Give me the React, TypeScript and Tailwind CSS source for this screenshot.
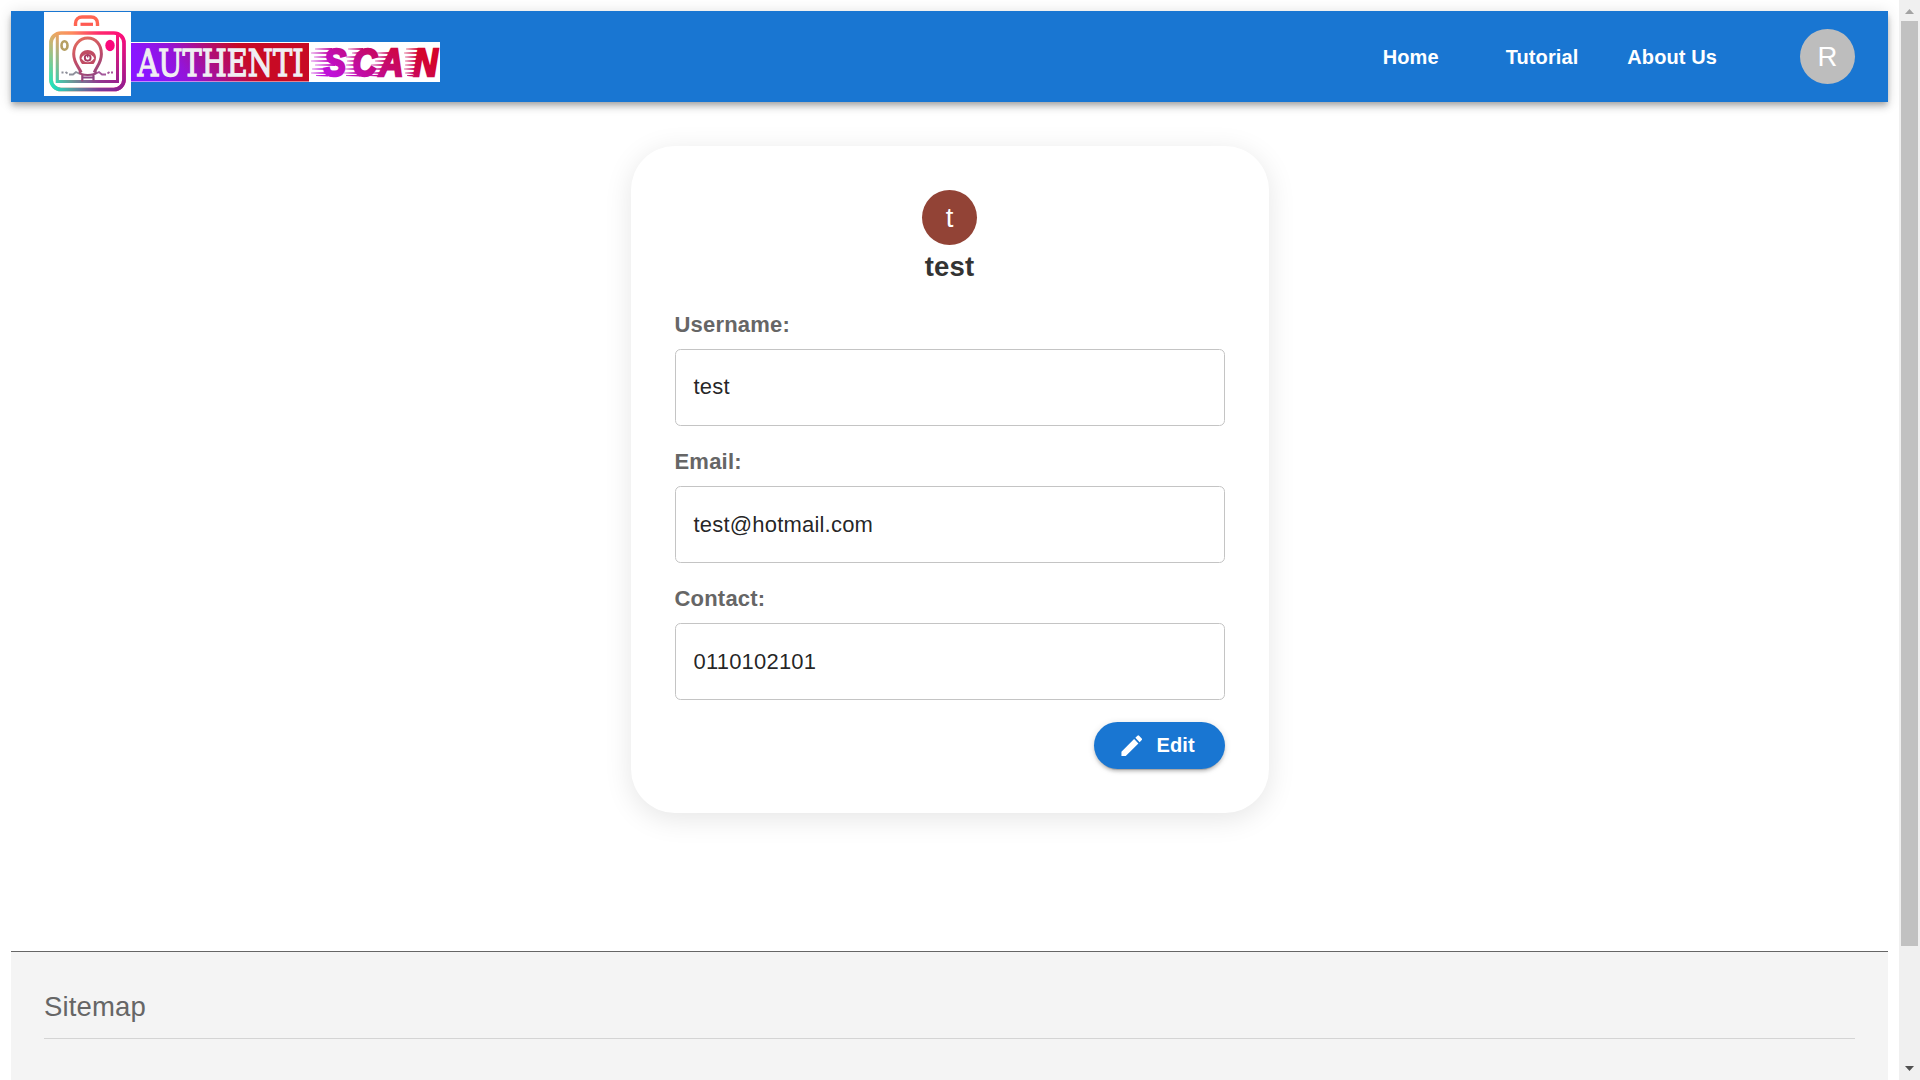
import React from "react";

function CameraLogo() {
  return (
    <svg className="block h-[84px] w-[87px] shrink-0" viewBox="0 0 87 84" fill="none">
      <defs>
        <linearGradient id="body" gradientUnits="userSpaceOnUse" x1="5" y1="20" x2="82" y2="20">
          <stop offset="0" stopColor="#e8b065" />
          <stop offset="0.3" stopColor="#ff8a5c" />
          <stop offset="0.65" stopColor="#ff2a6c" />
          <stop offset="1" stopColor="#ff0a7c" />
        </linearGradient>
        <linearGradient id="base" gradientUnits="userSpaceOnUse" x1="5" y1="20" x2="82" y2="20">
          <stop offset="0" stopColor="#00f5cc" />
          <stop offset="0.3" stopColor="#4c9ba4" />
          <stop offset="0.65" stopColor="#7a3a98" />
          <stop offset="1" stopColor="#8a1c90" />
        </linearGradient>
        <linearGradient id="bulb" gradientUnits="userSpaceOnUse" x1="30" y1="25" x2="50" y2="68">
          <stop offset="0" stopColor="#e8705c" />
          <stop offset="0.5" stopColor="#c04c68" />
          <stop offset="1" stopColor="#8c4484" />
        </linearGradient>
        <linearGradient id="fade" x1="0" y1="0" x2="0" y2="1">
          <stop offset="0.25" stopColor="#000" />
          <stop offset="0.95" stopColor="#fff" />
        </linearGradient>
        <mask id="lower">
          <rect width="87" height="84" fill="url(#fade)" />
        </mask>
      </defs>
      <rect width="87" height="84" fill="#fff" />
      <path d="M31.500 14v-2.500c0-4 3-6.500 6.500-6.500h9c4 0 6.500 2.500 6.500 6.500V14" stroke="#ff6552" strokeWidth="3.400" />
      <path d="M36.500 12.300h12.500" stroke="#ff5a52" strokeWidth="3.200" />
      {["url(#body)", "url(#base)"].map((paint, i) => (
        <g key={paint} stroke={paint} mask={i ? "url(#lower)" : undefined}>
          <rect x="7" y="21" width="73" height="56.500" rx="10" strokeWidth="3.700" />
          <path d="M13.300 22v47.600h60.200V22" strokeWidth="3" />
        </g>
      ))}
      <ellipse cx="20.500" cy="33.500" rx="3" ry="4.200" stroke="#b6a064" strokeWidth="2.600" />
      <ellipse cx="66" cy="33.500" rx="4.700" ry="5.700" fill="#fb087c" />
      <path d="M37 60.500c-1.500-5-7.300-9-7.300-18.500 0-9.500 6-16 14-16s13.700 6.500 13.700 16c0 9.500-5.700 13.500-7 18.500" stroke="url(#bulb)" strokeWidth="3" />
      <path d="M35.500 45.500c0-4.500 4-7.500 8.200-7.500s8.300 3 8.300 7.500c0 2.500-1 4.500-2.500 6.500h-11.500c-1.500-2-2.500-4-2.500-6.500Z" fill="#c04c64" />
      <path d="M37.300 46.200c2-3 4-4.200 6.400-4.200s4.500 1.200 6.600 4.200c-2 2.800-4 4-6.600 4s-4.400-1.200-6.400-4Z" fill="#fff" />
      <circle cx="43.700" cy="45.800" r="2.900" stroke="#a83a62" strokeWidth="1.900" />
      <path d="M43.700 42.500v3" stroke="#a83a62" strokeWidth="1.400" />
      <path d="M17.500 60.500h2M21.500 60l2 1.500M25 62.500h4l3-2.500 4 2" stroke="#8d8f9a" strokeWidth="1.800" />
      <path d="M69 60.500h-2M65.500 60l-2 1.500M62 62.500h-4l-3-2.500-4 2" stroke="#a3589a" strokeWidth="1.800" />
      <path d="M35.500 59.500c0 2.500 3 3.500 8.200 3.500s8.300-1 8.300-3.500M38.300 63v6.500M49.500 63v6.500" stroke="url(#bulb)" strokeWidth="2.200" />
      <path d="M38 65.500h12" stroke="#8c4484" strokeWidth="2" />
    </svg>
  );
}

/* Speed lines: [start, end] pairs for each row, one pair per letter. */
const streaks: { y: number; lines: [number, number][] }[] = [
  { y: 7, lines: [[184, 201], [217, 232], [275, 288]] },
  { y: 11, lines: [[180, 199], [221, 229], [246, 259], [273, 287]] },
  { y: 15, lines: [[183, 199], [215, 227], [242, 257], [274, 286]] },
  { y: 19, lines: [[180, 200], [216, 226], [244, 255], [274, 285]] },
  { y: 23, lines: [[184, 204], [215, 226], [240, 254], [274, 285]] },
  { y: 27, lines: [[181, 196], [214, 226], [241, 252], [273, 284]] },
  { y: 31, lines: [[180, 196], [213, 227], [239, 250], [274, 283]] },
  { y: 33.6, lines: [[185, 197], [215, 229], [238, 249], [276, 282]] },
];

function Wordmark() {
  return (
    <svg className="mt-[30px] block h-10 w-[309px] shrink-0 overflow-visible" viewBox="0 0 309 40">
      <defs>
        <linearGradient id="left" gradientUnits="userSpaceOnUse" x1="30" y1="50" x2="105" y2="0">
          <stop offset="0" stopColor="#8a16ff" />
          <stop offset="0.35" stopColor="#9414d8" />
          <stop offset="1" stopColor="#c80a24" />
        </linearGradient>
        <linearGradient id="scan" gradientUnits="userSpaceOnUse" x1="215" y1="42" x2="250" y2="-18">
          <stop offset="0" stopColor="#bf10d8" />
          <stop offset="0.5" stopColor="#c40a78" />
          <stop offset="1" stopColor="#d4042c" />
        </linearGradient>
        <linearGradient id="scanText" gradientUnits="userSpaceOnUse" x1="244" y1="42" x2="284" y2="-18">
          <stop offset="0" stopColor="#bf10d8" />
          <stop offset="0.5" stopColor="#c40a78" />
          <stop offset="1" stopColor="#d4042c" />
        </linearGradient>
      </defs>
      <rect width="309" height="40" fill="#fff" />
      <rect y="1" width="178" height="38.500" fill="url(#left)" />
      <text
        x="6.500"
        y="33.500"
        textLength="166"
        lengthAdjust="spacingAndGlyphs"
        fill="#f0eef2"
        stroke="#f0eef2"
        strokeWidth="1.300"
        fontFamily="'DejaVu Serif', serif"
        fontSize="36.500"
      >
        AUTHENTI
      </text>
      <g fill="url(#scan)">
        {streaks.map(({ y, lines }) => (
          <path
            key={y}
            d={lines.map(([a, b]) => `M${a} ${y - 0.3}L${b} ${y - 0.9}V${y + 0.9}L${a} ${y + 0.3}Z`).join("")}
          />
        ))}
      </g>
      <text
        transform="scale(0.88 1)"
        x="219 252 282 321"
        y="33.500"
        fill="url(#scanText)"
        stroke="url(#scanText)"
        strokeWidth="2.400"
        fontFamily="'Liberation Sans', Arial, sans-serif"
        fontSize="38"
        fontWeight="bold"
        fontStyle="italic"
      >
        SCAN
      </text>
    </svg>
  );
}

function Header() {
  return (
    <header className="flex h-[91px] bg-[#1976d2] pr-[33px] pl-[33px] text-white shadow-[0_3px_5px_-1px_rgba(0,0,0,0.2),0_5.5px_7px_0_rgba(0,0,0,0.14),0_1px_14px_0_rgba(0,0,0,0.12)]">
      <div className="flex pt-px">
        <CameraLogo />
        <Wordmark />
      </div>
      <nav className="ml-auto flex items-center text-[20px] font-bold tracking-[0.1px]">
        <a className="mr-[67px]">Home</a>
        <a className="mr-[49px]">Tutorial</a>
        <a className="mr-[83px]">About Us</a>
      </nav>
      <div className="mt-[18px] flex h-[55px] w-[55px] items-center justify-center rounded-full bg-[#bdbdbd] text-[27.5px]">R</div>
    </header>
  );
}

function Field({ label, value, lift = false }: { label: string; value: string; lift?: boolean }) {
  return (
    <div className="mb-[22px] w-full">
      <label className="flex h-[38px] items-start text-[22px] leading-[27px] font-bold tracking-[0.2px] text-[#666]">{label}</label>
      <div
        className={`flex h-[77px] items-center rounded-[5.5px] border border-[#c4c4c4] px-[18px] text-[22px] tracking-[0.2px] text-black/87 ${lift ? "pb-[2px]" : ""}`}
      >
        {value}
      </div>
    </div>
  );
}

function ProfileCard() {
  return (
    <section className="mx-auto mt-11 flex h-[667px] w-[638px] flex-col items-center rounded-[44px] bg-white p-11 shadow-[0_5.5px_27.5px_rgba(0,0,0,0.1)]">
      <div className="flex h-[55px] w-[55px] shrink-0 items-center justify-center rounded-full bg-[#924336] text-[27.5px] text-white">t</div>
      <h1 className="mb-[22px] h-[44px] text-[27.5px] leading-[44px] font-bold tracking-[0.2px] text-[#333]">test</h1>
      <Field label="Username:" value="test" lift />
      <Field label="Email:" value="test@hotmail.com" />
      <Field label="Contact:" value="0110102101" />
      <button className="flex h-[47px] w-[131px] shrink-0 items-center self-end rounded-full bg-[#1976d2] pl-[24.5px] text-[20px] font-bold tracking-[0.1px] text-white shadow-[0_4px_1px_-3px_rgba(0,0,0,0.2),0_3px_3px_0_rgba(0,0,0,0.14),0_1px_7px_0_rgba(0,0,0,0.12)]">
        <svg className="mr-[11px] h-[27.5px] w-[27.5px]" viewBox="0 0 24 24" fill="currentColor">
          <path d="M3 17.250V21h3.750L17.810 9.940l-3.750-3.750L3 17.250zM20.710 7.040c.390-.390.390-1.020 0-1.410l-2.340-2.340a.996.996 0 0 0-1.410 0l-1.830 1.830 3.750 3.750 1.830-1.830z" />
        </svg>
        <span className="pb-[2px]">Edit</span>
      </button>
    </section>
  );
}

function Scrollbar() {
  return (
    <div className="flex w-[21px] flex-col items-center bg-[#f0f0f0]">
      <svg className="h-[21px] w-[21px] shrink-0" viewBox="0 0 21 21">
        <path d="M6 14h9l-4.500-5z" fill="#a3a3a3" />
      </svg>
      <div className="h-[925px] w-[17px] bg-[#c1c1c1]" />
      <svg className="mt-auto h-[21px] w-[21px] shrink-0" viewBox="0 0 21 21">
        <path d="M6 7h9l-4.500 5z" fill="#505050" />
      </svg>
    </div>
  );
}

export default function App() {
  return (
    <div className="flex h-[1080px] w-[1920px] overflow-hidden bg-white font-['Liberation_Sans',Arial,sans-serif]">
      <div className="flex flex-1 flex-col px-[11px] pt-[11px]">
        <Header />
        <main className="h-[849px]">
          <ProfileCard />
        </main>
        <footer className="h-[129px] border-t border-[#666] bg-[#f4f4f4] px-[33px] pt-[33px]">
          <h2 className="h-[54px] border-b border-[#d4d4d4] text-[27.5px] leading-[44px] tracking-[0.15px] text-[#666]">Sitemap</h2>
        </footer>
      </div>
      <Scrollbar />
    </div>
  );
}
